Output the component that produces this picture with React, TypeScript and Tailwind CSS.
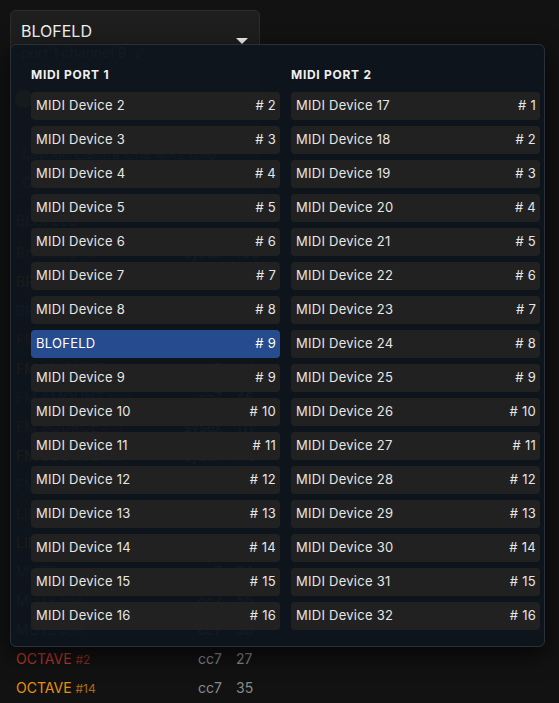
import React from 'react';

type Ctrl = { name: string; id: string; kind: string; value: string; tone: string };

// tones for the three oscillators, plus neutral
const tone: Record<string, string> = {
  red: 'text-[#c0392f]',
  orange: 'text-[#e8900c]',
  blue: 'text-[#2f6db8]',
  grey: 'text-[#6e6e6e]',
};

const controls: Ctrl[] = [
  { name: 'Brilliance', id: '#3', kind: 'sysex', value: '100', tone: 'red' },
  { name: 'BRILLIANCE', id: '#15', kind: 'sysex', value: '102', tone: 'orange' },
  { name: 'BRILLIANCE', id: '#27', kind: 'sysex', value: '104', tone: 'blue' },
  { name: 'FM AMOUNT', id: '#9', kind: 'cc7', value: '42', tone: 'red' },
  { name: 'FM AMOUNT', id: '#21', kind: 'cc7', value: '44', tone: 'orange' },
  { name: 'FM AMOUNT', id: '#33', kind: 'cc7', value: '46', tone: 'blue' },
  { name: 'FM SOURCE', id: '#10', kind: 'sysex', value: '111', tone: 'red' },
  { name: 'FM SOURCE', id: '#22', kind: 'sysex', value: '113', tone: 'orange' },
  { name: 'FM SOURCE', id: '#34', kind: 'sysex', value: '115', tone: 'blue' },
  { name: 'LIMIT WT', id: '#11', kind: 'sysex', value: '110', tone: 'red' },
  { name: 'LIMIT WT', id: '#23', kind: 'sysex', value: '112', tone: 'orange' },
  { name: 'MUTE', id: '#12', kind: 'cc7', value: '54', tone: 'grey' },
  { name: 'MUTE', id: '#24', kind: 'cc7', value: '56', tone: 'grey' },
  { name: 'MUTE', id: '#36', kind: 'cc7', value: '58', tone: 'grey' },
  { name: 'OCTAVE', id: '#2', kind: 'cc7', value: '27', tone: 'red' },
  { name: 'OCTAVE', id: '#14', kind: 'cc7', value: '35', tone: 'orange' },
];

const port1 = [
  ...Array.from({ length: 7 }, (_, i) => ({ label: `MIDI Device ${i + 2}`, ch: i + 2 })),
  { label: 'BLOFELD', ch: 9, active: true },
  ...Array.from({ length: 8 }, (_, i) => ({ label: `MIDI Device ${i + 9}`, ch: i + 9 })),
];

const port2 = Array.from({ length: 16 }, (_, i) => ({ label: `MIDI Device ${i + 17}`, ch: i + 1 }));

function DeviceColumn({ title, items }: { title: string; items: { label: string; ch: number; active?: boolean }[] }) {
  return (
    <div className="flex flex-col">
      <div className="h-[16px] mb-[9px] text-[12px] leading-[16px] font-bold tracking-[0.06em] text-[#f0f0f0]">
        {title}
      </div>
      <div className="flex flex-col gap-[6px]">
        {items.map((d) => (
          <div
            key={d.label}
            className={`h-[28px] flex items-center justify-between pl-[5px] pr-[4px] rounded-[4px] text-[13px] tracking-[0.02em] ${
              d.active ? 'bg-[#264b8e] text-white' : 'bg-[#212121] text-[#e6e6e6]'
            }`}
          >
            <span>{d.label}</span>
            <span># {d.ch}</span>
          </div>
        ))}
      </div>
    </div>
  );
}

export default function App() {
  return (
    <div className="relative min-h-screen bg-[#121212] font-['Inter','Noto_Sans',sans-serif] overflow-hidden">
      {/* ── Device panel behind the menu ─────────────────────────── */}
      <div className="ml-[10px] pt-[10px] w-[250px]">
        <div className="h-[62px] bg-[#1e1e1e] border border-[#2c2c2c] rounded-t-[5px] pl-[10px] pr-[11px] pt-[10px]">
          <div className="flex items-start justify-between h-[22px]">
            <span className="text-[16px] leading-[20px] text-[#f2f2f2]">BLOFELD</span>
            <svg width="12" height="6" viewBox="0 0 12 6" className="mt-[17px]">
              <path d="M0 0h12L6 6z" fill="#f2f2f2" />
            </svg>
          </div>
          <div className="flex items-center gap-2 text-[14px] leading-[20px] text-[#777]">
            port 1 channel 9
            <svg width="12" height="12" viewBox="0 0 24 24" fill="none" stroke="#777" strokeWidth="2">
              <path d="M17 3l4 4L8 20H4v-4z" />
            </svg>
          </div>
        </div>
        <div className="h-[126px] border-x border-b border-[#2c2c2c] bg-[#181818] px-[4px] pt-[18px]">
          <div className="w-[18px] h-[18px] rounded-full bg-[#a2741e]" />
          <div className="mt-[36px] pl-[7px] text-[14px] leading-[20px] text-[#777]">Layout: Electra One MK2 6x6</div>
          <div className="mt-[9px] pl-[7px] text-[14px] leading-[20px] text-[#777]">OSC A</div>
        </div>
        <div className="h-[40px] pt-[13px] pl-[6px] text-[14px] leading-[20px] text-[#777]">BLOFELD</div>
        <div className="flex flex-col pl-[6px]">
          {controls.map((c, i) => (
            <div key={i} className="h-[29px] flex items-center text-[14px]">
              <span className={`flex-1 ${tone[c.tone]}`}>
                {c.name} <span className="text-[12px] opacity-70">{c.id}</span>
              </span>
              <span className="w-[44px] text-right text-[#8a8a8a]">{c.kind}</span>
              <span className="w-[38px] pl-[14px] text-[#8a8a8a]">{c.value}</span>
            </div>
          ))}
        </div>
      </div>

      {/* ── Port / channel menu ──────────────────────────────────── */}
      <div className="absolute left-[10px] top-[44px] w-[535px] h-[603px] rounded-[6px] border border-[#2a3037] bg-[#0e151c]/[0.95] shadow-[0_8px_24px_rgba(0,0,0,0.7)] pl-[20px] pr-[4px] pt-[22px]">
        <div className="grid grid-cols-2 gap-x-[11px]">
          <DeviceColumn title="MIDI PORT 1" items={port1} />
          <DeviceColumn title="MIDI PORT 2" items={port2} />
        </div>
      </div>
    </div>
  );
}
